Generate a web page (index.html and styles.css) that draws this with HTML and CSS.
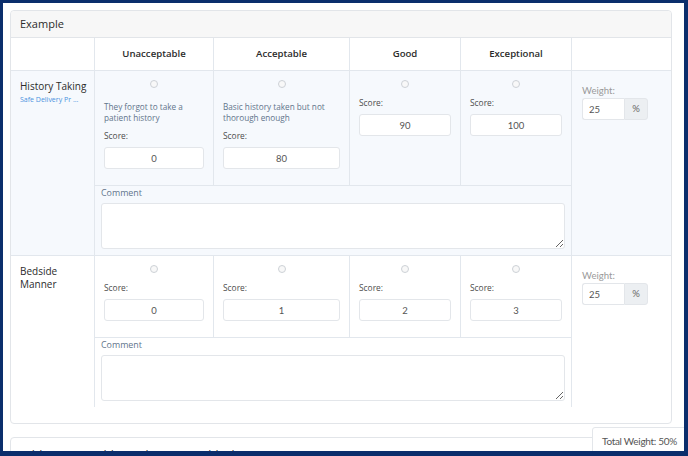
FILE: index.html
```html
<!DOCTYPE html>
<html lang="en">
<head>
<meta charset="utf-8">
<title>Rubric</title>
<link rel="stylesheet" href="styles.css">
</head>
<body>
<div class="frame">
  <section class="card">
    <header class="card-head">Example</header>
    <div class="card-body">
      <div class="rubric-head">
        <div class="th"></div>
        <div class="th">Unacceptable</div>
        <div class="th">Acceptable</div>
        <div class="th">Good</div>
        <div class="th">Exceptional</div>
        <div class="th th-last"></div>
      </div>

      <div class="crit crit-alt">
        <div class="name">
          <div class="name-title">History Taking</div>
          <a class="name-link">Safe Delivery Pr ...</a>
        </div>
        <div class="level">
          <input type="radio" class="radio" name="r1">
          <p class="desc">They forgot to take a patient history</p>
          <label class="score-label">Score:</label>
          <input class="score" type="text" value="0">
        </div>
        <div class="level">
          <input type="radio" class="radio" name="r1">
          <p class="desc">Basic history taken but not thorough enough</p>
          <label class="score-label">Score:</label>
          <input class="score" type="text" value="80">
        </div>
        <div class="level">
          <input type="radio" class="radio" name="r1">
          <label class="score-label">Score:</label>
          <input class="score" type="text" value="90">
        </div>
        <div class="level level-last">
          <input type="radio" class="radio" name="r1">
          <label class="score-label">Score:</label>
          <input class="score" type="text" value="100">
        </div>
        <div class="comment">
          <label class="comment-label">Comment</label>
          <textarea class="comment-box"></textarea>
        </div>
        <div class="weight">
          <label class="weight-label">Weight:</label>
          <div class="weight-group">
            <input class="weight-input" type="text" value="25">
            <span class="weight-addon">%</span>
          </div>
        </div>
      </div>

      <div class="crit crit-last">
        <div class="name">
          <div class="name-title">Bedside Manner</div>
        </div>
        <div class="level">
          <input type="radio" class="radio" name="r2">
          <label class="score-label">Score:</label>
          <input class="score" type="text" value="0">
        </div>
        <div class="level">
          <input type="radio" class="radio" name="r2">
          <label class="score-label">Score:</label>
          <input class="score" type="text" value="1">
        </div>
        <div class="level">
          <input type="radio" class="radio" name="r2">
          <label class="score-label">Score:</label>
          <input class="score" type="text" value="2">
        </div>
        <div class="level level-last">
          <input type="radio" class="radio" name="r2">
          <label class="score-label">Score:</label>
          <input class="score" type="text" value="3">
        </div>
        <div class="comment">
          <label class="comment-label">Comment</label>
          <textarea class="comment-box"></textarea>
        </div>
        <div class="weight">
          <label class="weight-label">Weight:</label>
          <div class="weight-group">
            <input class="weight-input" type="text" value="25">
            <span class="weight-addon">%</span>
          </div>
        </div>
      </div>
    </div>
  </section>

  <section class="card card-next">
    <div class="next-title">Add/remove additional comment blocks</div>
  </section>

  <div class="total">Total Weight: 50%</div>
</div>
</body>
</html>
```

FILE: styles.css
```css
* { box-sizing: border-box; }

html, body {
  margin: 0;
  padding: 0;
}

body {
  background: #0b2e6c;
  font-family: "Open Sans", "Noto Sans", sans-serif;
  color: #333;
  height: 456px;
  overflow: hidden;
}

.frame {
  position: relative;
  margin: 3px 4px 0 3px;
  height: 448px;
  background: #fff;
  overflow: hidden;
  padding: 7px 12px 0 7px;
}

.card {
  border: 1px solid #e2e5e9;
  border-radius: 4px;
  background: #fff;
}

.card-head {
  height: 27px;
  line-height: 26px;
  padding: 0 9px;
  background: #f7f7f7;
  border-bottom: 1px solid #e2e5e9;
  border-radius: 4px 4px 0 0;
  font-size: 11px;
  font-weight: 500;
  color: #2b2b2b;
}

.card-body {
  padding-bottom: 16px;
}

.rubric-head {
  display: grid;
  grid-template-columns: 84px 119px 136px 111px 110px 100px;
  border-bottom: 1px solid #e2e7ed;
}

.th {
  height: 32px;
  line-height: 32px;
  text-align: center;
  font-size: 9.6px;
  font-weight: 600;
  color: #2b2b2b;
  border-right: 1px solid #e2e7ed;
}

.rubric-head .th:nth-child(5) { border-right: none; }
.rubric-head .th-last { border-right: none; border-left: 1px solid #e2e7ed; }

.crit {
  display: grid;
  grid-template-columns: 84px 119px 136px 111px 110px 100px;
  grid-template-rows: auto auto;
}

.crit-alt {
  background: #f6f9fd;
  border-bottom: 1px solid #e2e7ed;
}

.name {
  grid-column: 1;
  grid-row: 1 / 3;
  border-right: 1px solid #e2e7ed;
  padding: 9px 4px 9px 9px;
}

.name-title {
  font-size: 10px;
  font-weight: 500;
  line-height: 13px;
  color: #2b2b2b;
}

.name-link {
  display: block;
  font-size: 7px;
  line-height: 14px;
  color: #4a92e0;
  white-space: nowrap;
}

.level {
  grid-row: 1;
  border-right: 1px solid #e2e7ed;
  border-bottom: 1px solid #e2e7ed;
  padding: 9px 9px 16px;
  display: flex;
  flex-direction: column;
}

.level-last { border-right: none; }

.radio {
  appearance: none;
  -webkit-appearance: none;
  display: block;
  width: 8px;
  height: 8px;
  margin: 0 auto 8px;
  border: 1px solid #cdd1d6;
  border-radius: 50%;
  background: #f8f8f8;
}

.desc {
  margin: 5px 0 6px;
  font-size: 8.2px;
  line-height: 11px;
  color: #62758c;
}

.score-label {
  display: block;
  font-size: 8.4px;
  line-height: 14px;
  color: #4d4d4d;
  margin-bottom: 4px;
}

.score {
  width: 100%;
  height: 22px;
  border: 1px solid #e3e6ea;
  border-radius: 3px;
  background: #fff;
  text-align: center;
  font-family: "Lato", "Open Sans", sans-serif;
  font-size: 9.5px;
  color: #555;
  padding: 0;
  margin: 0;
}

.comment {
  grid-column: 2 / 6;
  grid-row: 2;
  padding: 0 6px 6px;
  display: flex;
  flex-direction: column;
}

.comment-label {
  display: block;
  font-size: 8.9px;
  line-height: 14px;
  color: #62758c;
  margin-bottom: 3px;
}

.comment-box {
  display: block;
  width: 100%;
  height: 46px;
  border: 1px solid #e3e6ea;
  border-radius: 3px;
  background: #fff;
  resize: vertical;
  margin: 0;
  padding: 4px;
}

.weight {
  grid-column: 6;
  grid-row: 1 / 3;
  border-left: 1px solid #e2e7ed;
  padding: 14px 10px;
}

.weight-label {
  display: block;
  font-family: "Lato", "Open Sans", sans-serif;
  font-size: 9.6px;
  line-height: 12px;
  color: #9a9a9a;
  margin-bottom: 1px;
}

.weight-group {
  display: flex;
  width: 66px;
  height: 22px;
}

.weight-input {
  width: 42px;
  height: 22px;
  border: 1px solid #e3e6ea;
  border-right: none;
  border-radius: 3px 0 0 3px;
  background: #fff;
  font-family: "Lato", "Open Sans", sans-serif;
  font-size: 9.5px;
  color: #555;
  padding: 0 6px;
  margin: 0;
}

.weight-addon {
  width: 24px;
  height: 22px;
  line-height: 20px;
  text-align: center;
  background: #eceff2;
  border: 1px solid #e3e6ea;
  border-radius: 0 3px 3px 0;
  font-family: "Lato", "Open Sans", sans-serif;
  font-size: 9.5px;
  color: #666;
}

.card-next {
  margin-top: 13px;
  height: 40px;
  padding: 10px 9px;
}

.next-title {
  font-size: 12px;
  font-weight: 500;
  line-height: 16px;
  color: #333;
  white-space: nowrap;
}

.total {
  position: absolute;
  left: 589px;
  top: 424px;
  right: -1px;
  bottom: -10px;
  background: #fff;
  border: 1px solid #e3e6ea;
  border-radius: 3px 0 0 0;
  padding: 6px 0 6px 9px;
  font-family: "Lato", "Open Sans", sans-serif;
  font-size: 10px;
  line-height: 14px;
  letter-spacing: -0.3px;
  color: #555;
  white-space: nowrap;
}
```
